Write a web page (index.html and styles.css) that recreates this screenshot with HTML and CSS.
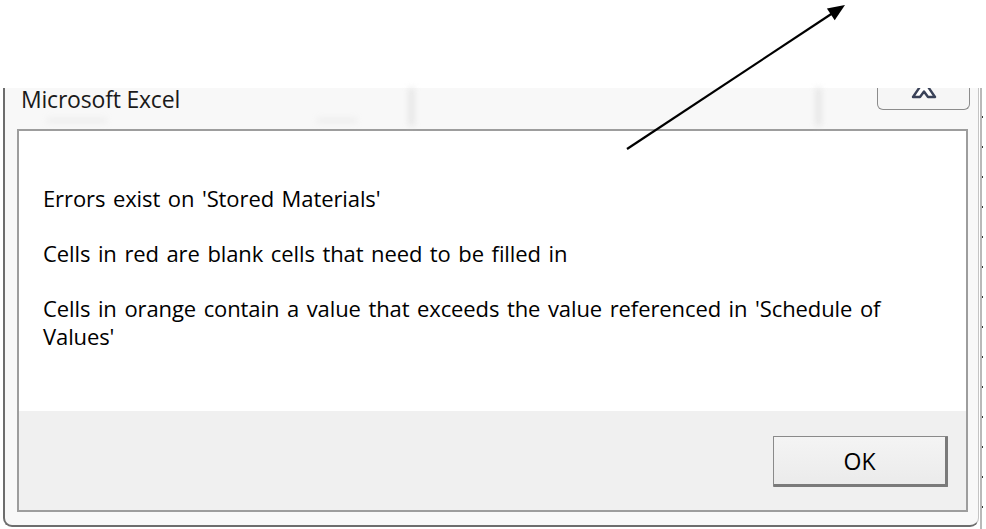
FILE: index.html
```html
<!DOCTYPE html>
<html lang="en">
<head>
<meta charset="utf-8">
<title>Microsoft Excel</title>
<link rel="stylesheet" href="styles.css">
</head>
<body>
<div class="page">
  <div class="sheet-edge"></div>

  <div class="dialog">
    <div class="titlebar">
      <span class="title">Microsoft Excel</span>
      <span class="glass-smudge smudge-a"></span>
      <span class="glass-smudge smudge-b"></span>
      <span class="glass-smudge smudge-c"></span>
      <span class="glass-smudge smudge-d"></span>
      <button class="close" type="button" aria-label="Close">
        <svg class="close-glyph" width="30" height="30" viewBox="0 0 30 30">
          <path d="M4 4 L11 4 L15 9.5 L19 4 L26 4 L18.5 15 L26 26 L19 26 L15 20.5 L11 26 L4 26 L11.5 15 Z"
                fill="#ffffff" stroke="#3a4258" stroke-width="2.4" stroke-linejoin="round"/>
        </svg>
      </button>
    </div>

    <div class="frame">
      <div class="message">
        <p>Errors exist on 'Stored Materials'</p>
        <p>Cells in red are blank cells that need to be filled in</p>
        <p>Cells in orange contain a value that exceeds the value referenced in 'Schedule of Values'</p>
      </div>
      <div class="buttons">
        <button class="ok" type="button">OK</button>
      </div>
    </div>
  </div>

  <svg class="pointer" width="986" height="529" viewBox="0 0 986 529">
    <line x1="627" y1="149" x2="832" y2="13.5" stroke="#000" stroke-width="2.2"/>
    <polygon points="845,5 834.7,20.2 826.9,8.6" fill="#000"/>
  </svg>
</div>
</body>
</html>
```

FILE: styles.css
```css
* {
  box-sizing: border-box;
}

html, body {
  margin: 0;
  padding: 0;
  background: #ffffff;
}

body {
  font-family: "Open Sans", "Noto Sans", "DejaVu Sans", sans-serif;
  color: #000;
}

.page {
  position: relative;
  width: 986px;
  height: 529px;
  overflow: hidden;
  padding: 88px 0 0 3px;
}

/* spreadsheet grid peeking out to the right of the dialog */
.sheet-edge {
  position: absolute;
  left: 980px;
  top: 88px;
  width: 3px;
  height: 441px;
  border-left: 2px solid #b9b9b9;
  background: repeating-linear-gradient(to bottom, transparent 0 28px, #3a3a3a 28px 30px);
}

.dialog {
  width: 976px;
  height: 439px;
  background: #f8f8f8;
  border-left: 2px solid #6d6d6d;
  border-right: 1px solid #c4c4c4;
  border-bottom: 2px solid #6d6d6d;
  border-radius: 0 0 9px 9px;
  padding: 0 10px 13px 12px;
  display: flex;
  flex-direction: column;
}

.titlebar {
  position: relative;
  height: 41px;
  display: flex;
  align-items: flex-start;
}

.title {
  font-size: 23px;
  color: #1a1a1a;
  padding: 0 0 0 4px;
  line-height: 22px;
  letter-spacing: -0.2px;
}

.glass-smudge {
  position: absolute;
  background: #d9d9d9;
  filter: blur(3px);
  opacity: 0.7;
}

.smudge-a { left: 392px; top: 0; width: 5px; height: 38px; }
.smudge-b { left: 799px; top: 0; width: 5px; height: 38px; }
.smudge-c { left: 30px; top: 30px; width: 60px; height: 5px; opacity: 0.35; }
.smudge-d { left: 300px; top: 30px; width: 40px; height: 5px; opacity: 0.35; }

.close {
  margin-left: auto;
  margin-right: -2px;
  width: 93px;
  height: 22px;
  padding: 0;
  border: 1px solid #8c8c8c;
  border-top: 0;
  border-radius: 0 0 6px 6px;
  background: #f6f6f6;
  overflow: hidden;
  display: flex;
  justify-content: center;
  align-items: flex-end;
}

.close-glyph {
  margin-bottom: 8px;
}

.frame {
  flex: 1;
  border: 2px solid #9d9d9d;
  display: flex;
  flex-direction: column;
  background: #ffffff;
}

.message {
  flex: 1;
  padding: 54px 40px 0 24px;
  font-size: 22px;
  line-height: 27.5px;
  letter-spacing: -0.1px;
  word-spacing: 2px;
}

.message p {
  margin: 0 0 27.5px 0;
}

.buttons {
  height: 99px;
  background: #f0f0f0;
  display: flex;
  justify-content: flex-end;
  align-items: flex-start;
  padding: 25px 18px 0 0;
}

.ok {
  width: 175px;
  height: 51px;
  font-family: inherit;
  font-size: 23px;
  color: #000;
  background: linear-gradient(to bottom, #f4f4f4, #ebebeb);
  border: 1px solid #8a8a8a;
  border-right: 3px solid #7a7a7a;
  border-bottom: 3px solid #7a7a7a;
  border-radius: 1px;
  padding: 0;
}

.pointer {
  position: absolute;
  left: 0;
  top: 0;
  pointer-events: none;
}
```
